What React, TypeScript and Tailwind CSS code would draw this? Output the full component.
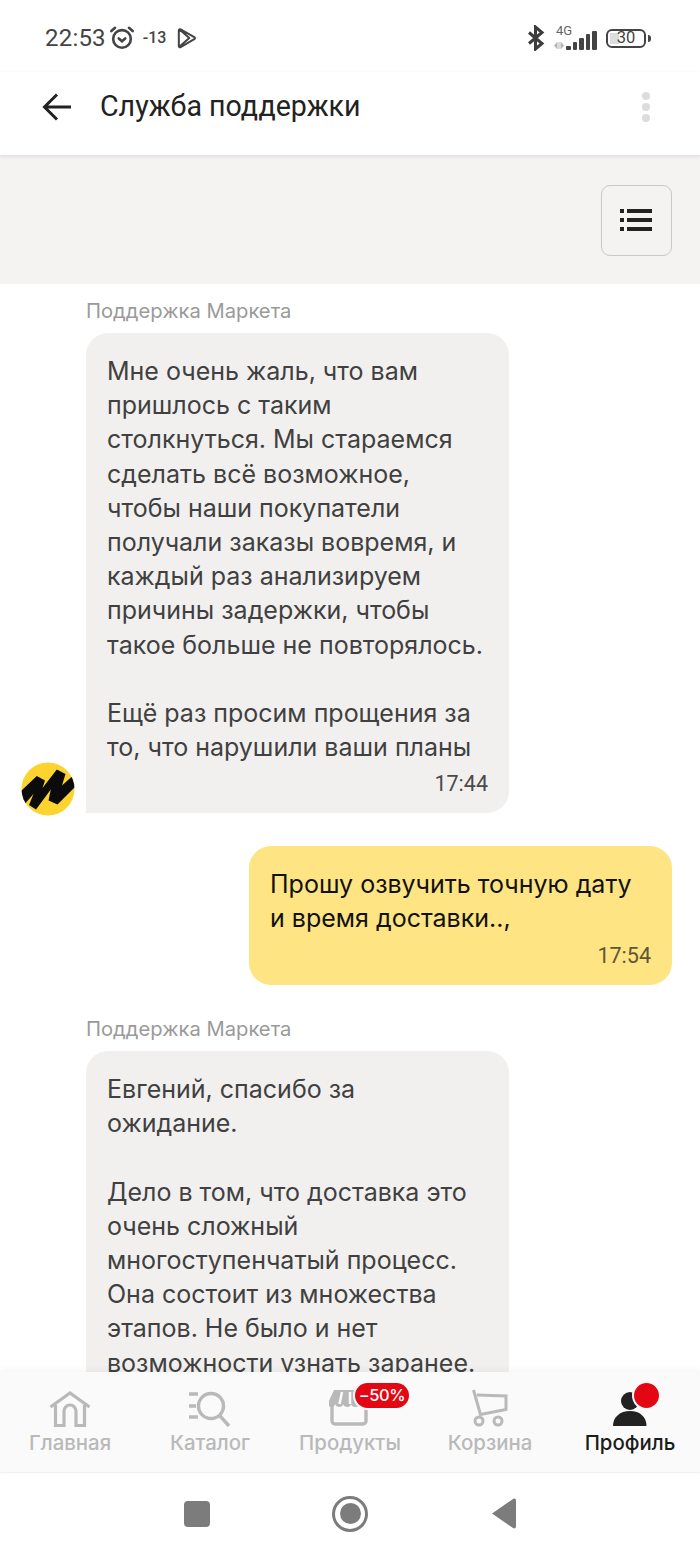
import React from 'react';

const SANS = "font-['Inter',sans-serif]";

const MarketLogo = () => (
  <svg width="54" height="54" viewBox="0 0 54 54" className="shrink-0">
    <circle cx="27" cy="27" r="26.500" fill="#fcd32f" />
    <clipPath id="logo-clip"><circle cx="27" cy="27" r="26.500" /></clipPath>
    <path
      clipPath="url(#logo-clip)"
      fill="#0b0b0b"
      d="M-1 30 15.800 14 24 18.500 21.500 26 35.800 7.500 44.500 12 41 23.500 51.500 14 57 22 36.500 42.500 27.500 38.500 29.800 27.500 15 47.500 8 43 12.500 32 2 44z"
    />
  </svg>
);

const Bubble = ({ lines, time }: { lines: string[]; time?: string }) => (
  <div className="w-[423px] rounded-t-[22px] rounded-br-[22px] bg-[#f1f0ef] pb-[17px] pl-[21px] pr-[21px] pt-[21px]">
    <div className={`${SANS} text-[25px] leading-[34.200px] text-[#404040]`}>
      {lines.map((l, i) => (
        <div key={i} className="h-[34.200px] whitespace-nowrap">{l}</div>
      ))}
    </div>
    {time && <div className="mt-[7px] text-right font-['Roboto',sans-serif] text-[21.500px] leading-[25px] text-[#4a4a4a]">{time}</div>}
  </div>
);

const Tab = ({ label, active, icon }: { label: string; active?: boolean; icon: React.ReactNode }) => (
  <div className="flex w-[140px] flex-col items-center">
    <div className="relative flex h-[44px] w-full items-end justify-center">{icon}</div>
    <div className={`mt-[2px] ${SANS} text-[20.400px] font-medium leading-[28px] ${active ? 'text-[#1c1c1c]' : 'text-[#b9b9b9]'}`}>{label}</div>
  </div>
);

export default function App() {
  return (
    <div className="flex h-[1556px] w-[700px] flex-col overflow-hidden bg-white">
      {/* status bar */}
      <div className="flex h-[72px] items-center justify-between pl-[45px] pr-[49px] pt-[4px] font-['Roboto',sans-serif] text-[#444]">
        <div className="flex items-center">
          <span className="text-[24px] leading-none tracking-[0.2px]">22:53</span>
          <svg width="26" height="26" viewBox="0 0 28 28" fill="none" stroke="#444" strokeWidth="2.800" strokeLinecap="round" className="ml-[3px]">
            <circle cx="14" cy="15" r="9.500" />
            <path d="M10.500 14.500l3.500 3 3.500-3M2.500 6.500l4-3.500M25.500 6.500l-4-3.500" />
          </svg>
          <span className="ml-[8px] text-[16px] font-medium leading-none">-13</span>
          <svg width="20" height="22" viewBox="0 0 22 24" fill="none" stroke="#444" strokeWidth="2.200" strokeLinejoin="round" className="ml-[11px]">
            <path d="M2 3.500c0-1 1-1.500 2-1l15 8.500c1 .6 1 1.700 0 2.300L4 22c-1 .5-2 0-2-1zM2.500 2.500l11 9.500-11 9.500" />
          </svg>
        </div>
        <div className="flex items-center">
          <svg width="18" height="26" viewBox="0 0 18 26" fill="none" stroke="#3c3c3c" strokeWidth="3" className="mr-[8px]">
            <path d="M2 7.500l13 11-6.500 5.500V2L15 7.500 2 18.500" />
          </svg>
          <div className="relative mr-[9px] h-[24px] w-[44px]">
            <span className="absolute left-[3px] top-[-2px] text-[13px] leading-[14px] text-[#666]">4G</span>
            <div className="absolute bottom-[0px] left-[13px] flex items-end gap-[2px]">
              <div className="h-[4px] w-[4.500px] rounded-[1px] bg-[#444]" />
              <div className="h-[8px] w-[4.500px] rounded-[1px] bg-[#444]" />
              <div className="h-[12px] w-[4.500px] rounded-[1px] bg-[#444]" />
              <div className="h-[16px] w-[4.500px] rounded-[1px] bg-[#444]" />
              <div className="h-[19px] w-[4.500px] rounded-[1px] bg-[#444]" />
            </div>
            <svg width="10" height="7" viewBox="0 0 10 7" fill="#b5b5b5" className="absolute bottom-[1px] left-[1px]">
              <path d="M0 3.500 3 0v7zM3.500 0h1v7h-1zM5.500 0h1v7h-1zM7 0l3 3.500L7 7z" />
            </svg>
          </div>
          <div className="relative flex h-[19px] w-[40px] items-center justify-center rounded-[6px] border-2 border-[#444]">
            <div className="absolute left-[2px] top-[2px] h-[11px] w-[9px] bg-[#ddd]" />
            <span className="relative text-[16.500px] leading-none text-[#444]">30</span>
          </div>
          <div className="ml-[2px] h-[7px] w-[3px] rounded-r bg-[#444]" />
        </div>
      </div>

      {/* header */}
      <div className="z-10 flex h-[84px] items-center border-b border-[#e6e5e3] pb-[14px] pl-[42px] pr-[50px] shadow-[0_1px_3px_rgba(0,0,0,0.08)]">
        <svg width="30" height="28" viewBox="0 0 30 28" fill="none" stroke="#222" strokeWidth="3" className="shrink-0">
          <path d="M29 14H3M15 1.500 2.500 14 15 26.500" />
        </svg>
        <div className="ml-[28px] flex-1 font-['Roboto',sans-serif] text-[28.600px] leading-none text-[#222]">Служба поддержки</div>
        <div className="flex flex-col gap-[3px]">
          <div className="h-[8px] w-[8px] rounded-full bg-[#dcdcdc]" />
          <div className="h-[8px] w-[8px] rounded-full bg-[#dcdcdc]" />
          <div className="h-[8px] w-[8px] rounded-full bg-[#dcdcdc]" />
        </div>
      </div>

      {/* toolbar */}
      <div className="flex h-[128px] shrink-0 items-center justify-end bg-[#f4f3f2] pr-[28px]">
        <div className="flex h-[71px] w-[71px] flex-col items-center justify-center gap-[5px] rounded-[9px] border border-[#c9c8c5] pr-[2px]">
          {[0, 1, 2].map((i) => (
            <div key={i} className="flex items-center gap-[3px]">
              <div className="h-[4px] w-[4px] bg-[#222]" />
              <div className="h-[4px] w-[25px] bg-[#222]" />
            </div>
          ))}
        </div>
      </div>

      {/* messages */}
      <div className="flex h-[1088px] shrink-0 flex-col overflow-hidden">
        <div className={`ml-[86px] mt-[14px] ${SANS} text-[20.200px] leading-[26px] text-[#9a9a9a]`}>Поддержка Маркета</div>
        <div className="mt-[9px] flex items-end">
          <div className="mb-[-3px] ml-[21px] mr-[11px]"><MarketLogo /></div>
          <Bubble
            time="17:44"
            lines={[
              'Мне очень жаль, что вам',
              'пришлось с таким',
              'столкнуться. Мы стараемся',
              'сделать всё возможное,',
              'чтобы наши покупатели',
              'получали заказы вовремя, и',
              'каждый раз анализируем',
              'причины задержки, чтобы',
              'такое больше не повторялось.',
              '\u00a0',
              'Ещё раз просим прощения за',
              'то, что нарушили ваши планы',
            ]}
          />
        </div>
        <div className="mr-[28px] mt-[33px] w-[423px] self-end rounded-[22px] bg-[#fee483] pb-[17px] pl-[21px] pr-[21px] pt-[21px]">
          <div className={`${SANS} text-[25px] leading-[34.200px] text-[#111]`}>
            <div className="whitespace-nowrap">Прошу озвучить точную дату</div>
            <div className="whitespace-nowrap">и время доставки..,</div>
          </div>
          <div className="mt-[7px] text-right font-['Roboto',sans-serif] text-[21.500px] leading-[25px] text-[#5e5636]">17:54</div>
        </div>
        <div className={`ml-[86px] mt-[31px] ${SANS} text-[20.200px] leading-[26px] text-[#9a9a9a]`}>Поддержка Маркета</div>
        <div className="ml-[86px] mt-[9.500px]">
          <Bubble
            lines={[
              'Евгений, спасибо за',
              'ожидание.',
              '\u00a0',
              'Дело в том, что доставка это',
              'очень сложный',
              'многоступенчатый процесс.',
              'Она состоит из множества',
              'этапов. Не было и нет',
              'возможности узнать заранее.',
            ]}
          />
        </div>
      </div>

      {/* tab bar */}
      <div className="z-10 flex h-[100px] shrink-0 items-start bg-[#fafafa] pt-[11px] shadow-[0_-3px_6px_rgba(0,0,0,0.04)]">
        <Tab
          label="Главная"
          icon={
            <svg width="42" height="36" viewBox="0 0 42 36" fill="none" stroke="#b9b9b9" strokeWidth="3.200">
              <path d="M1.500 16 21 2l19.500 14M6.500 14v20.500h8.500V20a6 6 0 0 1 12 0v14.500h8.500V14" />
            </svg>
          }
        />
        <Tab
          label="Каталог"
          icon={
            <svg width="44" height="36" viewBox="0 0 44 36" fill="none" stroke="#b9b9b9" strokeWidth="3.400">
              <circle cx="23" cy="15" r="12.500" />
              <path d="M32 25l9 10M1 3h9M1 15h7M1 26h9" />
            </svg>
          }
        />
        <Tab
          label="Продукты"
          icon={
            <>
              <svg width="40" height="38" viewBox="0 0 40 38" fill="none" className="mr-[2px]">
                <path d="M3 15v17a3 3 0 0 0 3 3h28a3 3 0 0 0 3-3V15" stroke="#b9b9b9" strokeWidth="3.400" />
                <path d="M5 1h30l4 13c0 5-8 5-9 1 0 4-7 4-8 0 0 4-7 4-8 0 0 4-7 4-8 0-1 5-7 4-7-1z" fill="#b9b9b9" />
                <path d="M13 3l-2.500 12M21 3v12" stroke="#fafafa" strokeWidth="2.500" />
              </svg>
              <div className={`absolute left-[73px] top-[-2px] flex h-[29px] w-[58px] items-center justify-center rounded-full border-2 border-[#fafafa] bg-[#e30613] ${SANS} text-[16.500px] font-medium leading-none tracking-[-0.4px] text-white`}>−50%</div>
            </>
          }
        />
        <Tab
          label="Корзина"
          icon={
            <svg width="36" height="38" viewBox="0 0 36 38" fill="none" stroke="#b9b9b9" strokeWidth="3">
              <path d="M1.500 1 8.500 25.500 34 20.500V7L5 6" />
              <circle cx="7" cy="32" r="4" />
              <circle cx="26" cy="32" r="4" />
            </svg>
          }
        />
        <Tab
          active
          label="Профиль"
          icon={
            <>
              <svg width="34" height="35" viewBox="0 0 34 35" fill="#222">
                <path d="M0 34c0-9 7-15 17-15s16.500 6 16.500 15z" />
                <circle cx="17" cy="9" r="9" />
              </svg>
              <div className="absolute left-[72px] top-[-2px] box-content h-[25px] w-[25px] rounded-full border-2 border-[#fafafa] bg-[#e30613]" />
            </>
          }
        />
      </div>

      {/* android nav */}
      <div className="flex flex-1 items-center justify-center border-t border-[#f1f1f1] pb-[2px]">
        <div className="flex w-[333px] items-center justify-between">
          <div className="h-[26px] w-[26px] rounded-[4px] bg-[#7c7c7c]" />
          <div className="flex h-[36px] w-[36px] items-center justify-center rounded-full border-[3px] border-[#7c7c7c]">
            <div className="h-[21px] w-[21px] rounded-full bg-[#7c7c7c]" />
          </div>
          <svg width="26" height="31" viewBox="0 0 26 31" fill="#7c7c7c">
            <path d="M1 15.500 22 1c1.500-1 3 0 3 1.500v26c0 1.500-1.500 2.500-3 1.500z" />
          </svg>
        </div>
      </div>
    </div>
  );
}
